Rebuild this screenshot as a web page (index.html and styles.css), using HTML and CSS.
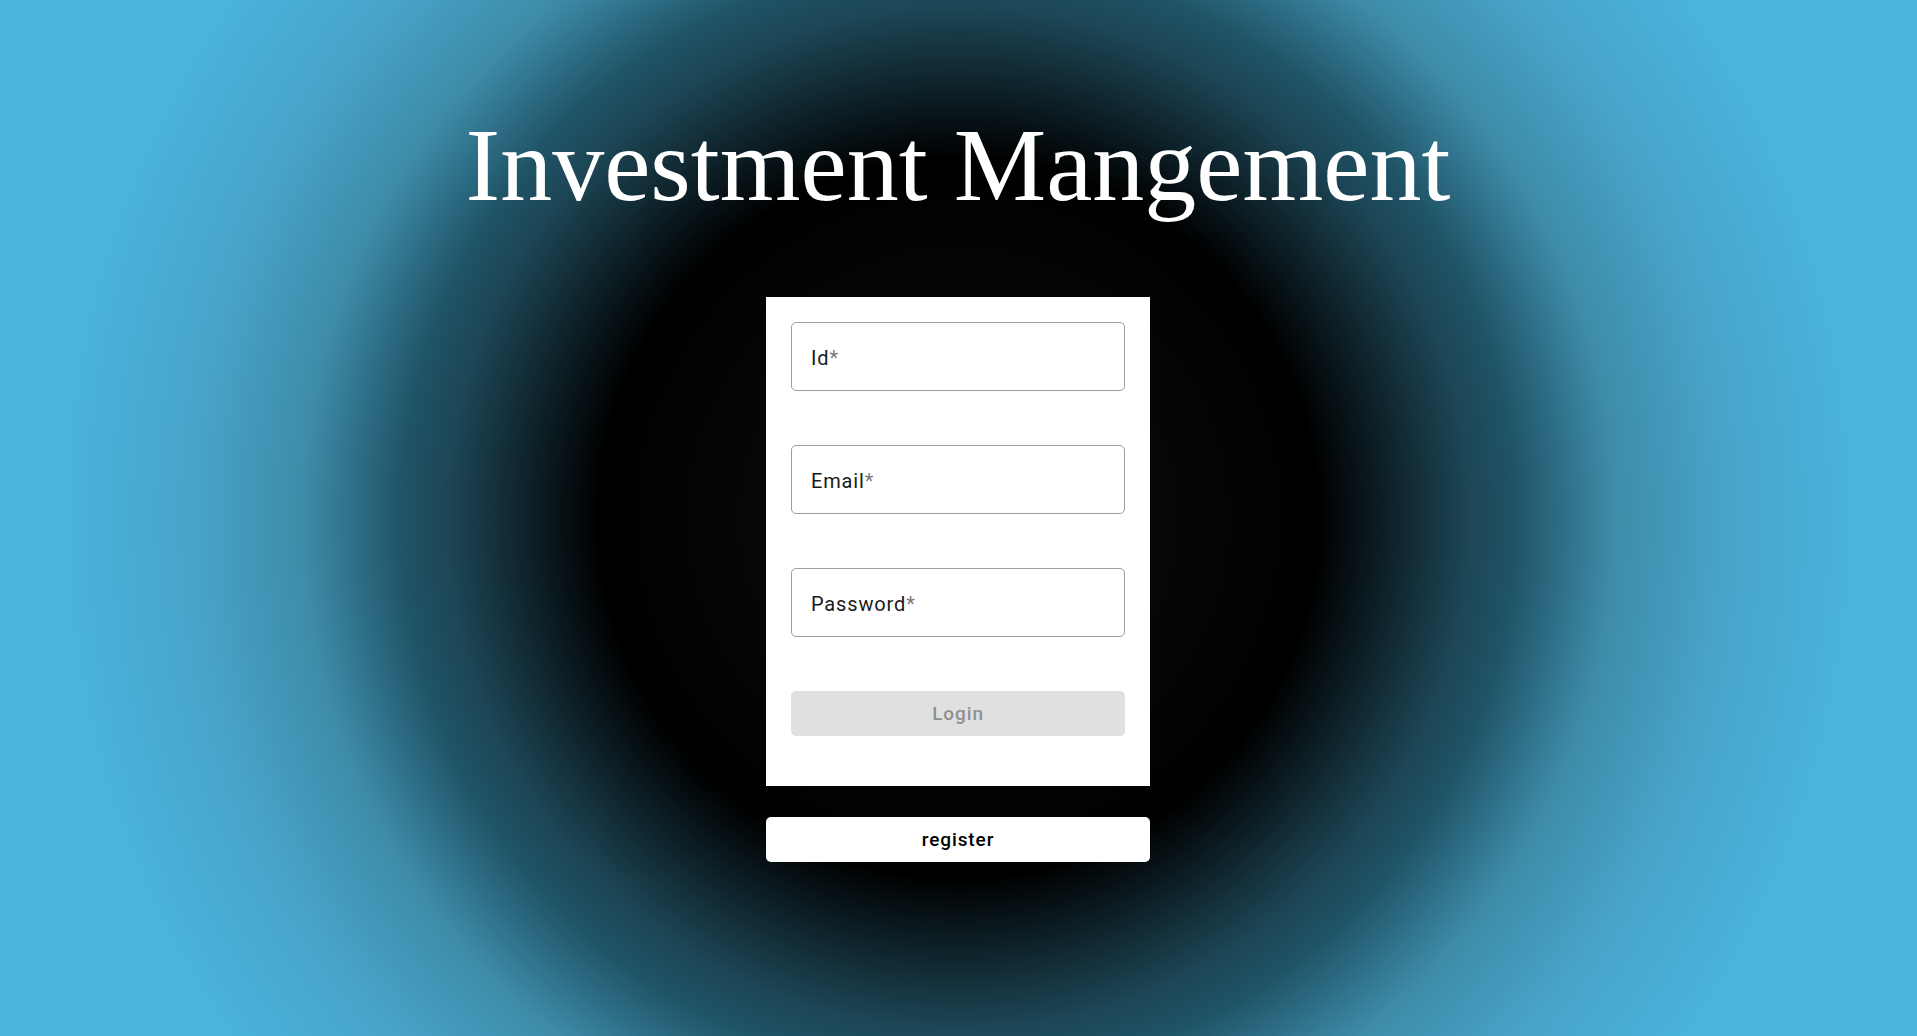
FILE: index.html
```html
<!DOCTYPE html>
<html lang="en">
<head>
  <meta charset="UTF-8" />
  <meta name="viewport" content="width=device-width, initial-scale=1.0" />
  <title>Investment Mangement</title>
  <link rel="stylesheet" href="styles.css">
</head>
<body>
  <div class="container">
    <h1>Investment Mangement</h1>

    <form id="loginForm" class="card">
      <div class="field">
        <label for="user_id">Id<span class="req">*</span></label>
        <input type="text" id="user_id" name="user_id" required />
      </div>

      <div class="field">
        <label for="email">Email<span class="req">*</span></label>
        <input type="email" id="email" name="email" required />
      </div>

      <div class="field">
        <label for="password">Password<span class="req">*</span></label>
        <input type="password" id="password" name="password" required />
      </div>

      <button type="submit" class="login" disabled>Login</button>
    </form>

    <button type="button" class="register">register</button>
  </div>
</body>
</html>
```

FILE: styles.css
```css
html,
body {
  margin: 0;
  padding: 0;
  min-height: 100vh;
}

body {
  font-family: Roboto, "Liberation Sans", sans-serif;
  background: radial-gradient(circle at 50% 50%,
    #0e0f11 0%,
    #000 33%,
    #1d4757 47%,
    #1f5366 51%,
    #3d8ba8 60%,
    #48a3c8 70%,
    #4ab3de 82%,
    #4ab3de 100%);
}

.container {
  display: flex;
  flex-direction: column;
  align-items: center;
  padding: 105px 1px 0 0;
}

h1 {
  margin: 0 0 72px;
  font-family: "Liberation Serif", "Times New Roman", serif;
  font-weight: normal;
  font-size: 104px;
  line-height: 120px;
  color: #fff;
}

.card {
  background: #fff;
  width: 334px;
  padding: 25px 25px 50px;
  display: flex;
  flex-direction: column;
  gap: 54px;
}

.field {
  position: relative;
  height: 67px;
  border: 1px solid #9e9e9e;
  border-radius: 5px;
}

.field label {
  position: absolute;
  left: 19px;
  top: 23px;
  font-size: 20px;
  line-height: 24px;
  letter-spacing: 0.85px;
  color: #1a1a1a;
  pointer-events: none;
}

.req {
  color: #7a7a7a;
}

.field input {
  width: 100%;
  height: 100%;
  box-sizing: border-box;
  border: none;
  background: transparent;
  outline: none;
  padding: 0 19px;
  font-size: 20px;
  font-family: inherit;
}

.login,
.register {
  height: 45px;
  border: none;
  border-radius: 5px;
  font-family: inherit;
  font-size: 19px;
  font-weight: 500;
  letter-spacing: 0.9px;
}

.login {
  background: #e0e0e0;
  color: #8f8f8f;
}

.register {
  margin-top: 31px;
  width: 384px;
  background: #fff;
  color: #000;
  cursor: pointer;
}
```
